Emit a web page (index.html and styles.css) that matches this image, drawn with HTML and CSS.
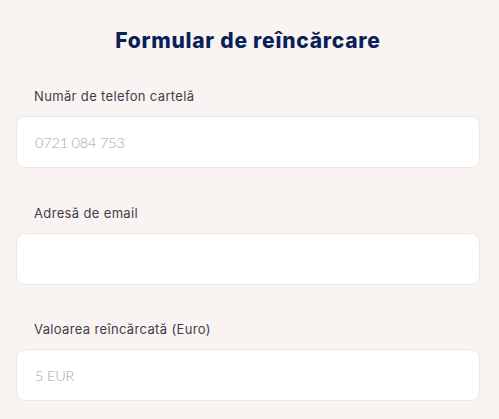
FILE: index.html
```html
<!DOCTYPE html>
<html lang="ro">
<head>
<meta charset="utf-8">
<link rel="stylesheet" href="styles.css">
</head>
<body>
<main class="form">
  <h1 class="title">Formular de reîncărcare</h1>
  <div class="field">
    <label class="label">Număr de telefon cartelă</label>
    <div class="input"><span class="placeholder">0721 084 753</span></div>
  </div>
  <div class="field">
    <label class="label">Adresă de email</label>
    <div class="input"></div>
  </div>
  <div class="field">
    <label class="label">Valoarea reîncărcată (Euro)</label>
    <div class="input"><span class="placeholder">5 EUR</span></div>
  </div>
</main>
</body>
</html>
```
FILE: styles.css
```css
html, body {
  margin: 0;
  padding: 0;
  background: #f9f4f1;
  width: 499px;
  height: 419px;
  overflow: hidden;
}
body {
  font-family: Inter, Lato, sans-serif;
}
.form {
  display: flex;
  flex-direction: column;
  gap: 36.5px;
  padding: 29px 19px 0 16px;
}
.title {
  margin: 0 0 -1.5px;
  text-align: center;
  font-size: 21px;
  line-height: 24px;
  font-weight: 800;
  color: #0b1f5b;
  letter-spacing: 0.75px;
}
.field {
  display: flex;
  flex-direction: column;
  gap: 12px;
}
.label {
  padding-left: 18px;
  font-size: 13px;
  line-height: 16px;
  font-weight: 400;
  color: #3e3e4c;
  letter-spacing: 0.35px;
}
.input {
  height: 52px;
  box-sizing: border-box;
  background: #fff;
  border: 1px solid #ebe7e4;
  border-radius: 9px;
  display: flex;
  align-items: center;
  padding-left: 18px;
}
.placeholder {
  font-family: Lato, sans-serif;
  font-size: 14.5px;
  font-weight: 300;
  color: #a2a6af;
  letter-spacing: -0.2px;
}
```
